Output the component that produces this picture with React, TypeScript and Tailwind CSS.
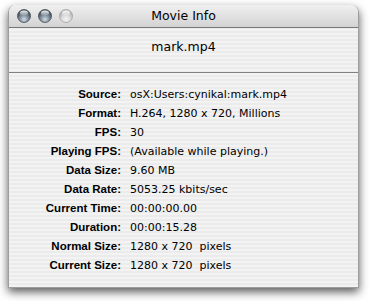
import React from 'react';

const rows: [string, string][] = [
  ['Source:', 'osX:Users:cynikal:mark.mp4'],
  ['Format:', 'H.264, 1280 x 720, Millions'],
  ['FPS:', '30'],
  ['Playing FPS:', '(Available while playing.)'],
  ['Data Size:', '9.60 MB'],
  ['Data Rate:', '5053.25 kbits/sec'],
  ['Current Time:', '00:00:00.00'],
  ['Duration:', '00:00:15.28'],
  ['Normal Size:', '1280 x 720  pixels'],
  ['Current Size:', '1280 x 720  pixels'],
];

const Light: React.FC<{ id: string; dim?: boolean }> = ({ id, dim }) => (
  <svg width="14" height="14" viewBox="0 0 14 14">
    <defs>
      <radialGradient id={`g-${id}`} cx="50%" cy="75%" r="60%">
        <stop offset="0%" stopColor={dim ? '#f4f4f4' : '#d3dde6'} />
        <stop offset="55%" stopColor={dim ? '#dadada' : '#7f8e9b'} />
        <stop offset="100%" stopColor={dim ? '#b3b3b3' : '#45525d'} />
      </radialGradient>
      <linearGradient id={`h-${id}`} x1="0" y1="0" x2="0" y2="1">
        <stop offset="0%" stopColor="#ffffff" stopOpacity="0.95" />
        <stop offset="100%" stopColor="#ffffff" stopOpacity="0.1" />
      </linearGradient>
    </defs>
    <circle cx="7" cy="7" r="6.5" fill={`url(#g-${id})`} stroke={dim ? '#a5a5a5' : '#434c54'} strokeWidth="0.8" />
    <ellipse cx="7" cy="4.1" rx="4.2" ry="2.5" fill={`url(#h-${id})`} />
  </svg>
);

export default function App() {
  return (
    <div className="w-[369px] h-[301px] bg-white pt-[5px] pl-[8px] overflow-hidden">
      <div
        className="w-[351px] h-[283px] flex flex-col rounded-t-[7px] border-x border-b border-[#9d9d9d] shadow-[0_4px_10px_rgba(0,0,0,0.65)] bg-[image:repeating-linear-gradient(to_bottom,#f3f3f3_0px,#f3f3f3_2px,#ebebeb_2px,#ebebeb_4px)]"
        style={{ fontFamily: '"DejaVu Sans", sans-serif' }}
      >
        {/* title bar */}
        <div className="relative h-[23px] shrink-0 rounded-t-[7px] bg-linear-to-b from-[#f0f0f0] to-[#d3d3d3] border-b border-[#777777] flex items-center justify-center">
          <div className="absolute left-[8px] top-[4px] flex gap-[7px]">
            <Light id="a" />
            <Light id="b" />
            <Light id="c" dim />
          </div>
          <span className="text-[12.5px] leading-[22px] text-black">Movie Info</span>
        </div>

        {/* filename */}
        <div className="h-[44px] shrink-0 pt-[11px] text-center text-[12.5px] leading-[16px] text-black">
          mark.mp4
        </div>
        <div className="h-px bg-[#818181] shrink-0" />

        {/* info rows */}
        <div className="pt-[12px] grid grid-cols-[112px_1fr] gap-x-[9px]">
          {rows.map(([label, value]) => (
            <React.Fragment key={label}>
              <div
                className="text-right font-bold text-[11.5px] leading-[19px] text-black whitespace-nowrap"
                style={{ fontFamily: '"Liberation Sans", Arial, sans-serif' }}
              >
                {label}
              </div>
              <div className="text-[11px] leading-[19px] text-black whitespace-pre">{value}</div>
            </React.Fragment>
          ))}
        </div>
      </div>
    </div>
  );
}
